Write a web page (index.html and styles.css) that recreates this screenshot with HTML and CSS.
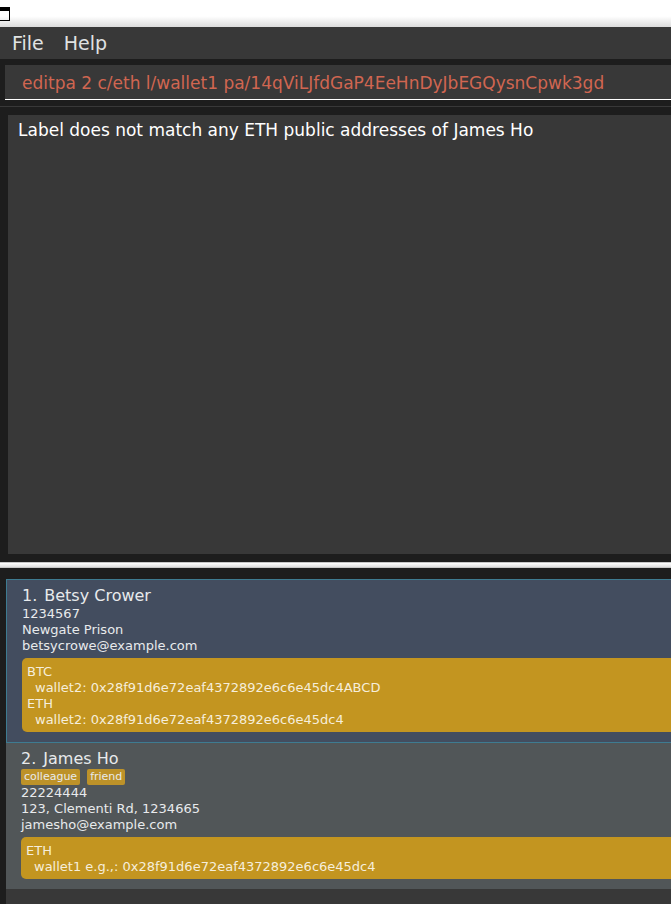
FILE: index.html
```html
<!DOCTYPE html>
<html lang="en">
<head>
<meta charset="utf-8">
<title>Address Book</title>
<link rel="stylesheet" href="styles.css">
</head>
<body>
<header class="titlebar">
  <svg class="window-icon" width="10" height="14" viewBox="0 0 10 14" aria-hidden="true">
    <path d="M0 0h10v14H0v-1h9V4H0z" fill="#000"/>
  </svg>
</header>
<nav class="menubar">
  <button class="menu" type="button">File</button>
  <button class="menu" type="button">Help</button>
</nav>
<div class="command-pane">
  <input class="command" type="text" aria-label="Command" spellcheck="false" value="editpa 2 c/eth l/wallet1 pa/14qViLJfdGaP4EeHnDyJbEGQysnCpwk3gd">
</div>
<section class="result-pane">
  <output class="result">Label does not match any ETH public addresses of James Ho</output>
</section>
<div class="divider"></div>
<main class="list-pane">
  <div class="list">
    <article class="card selected">
      <h2 class="name"><span>1.</span><span>Betsy Crower</span></h2>
      <p>1234567</p>
      <p>Newgate Prison</p>
      <p>betsycrowe@example.com</p>
      <div class="wallets">
        <p>BTC</p>
        <p class="address">wallet2: 0x28f91d6e72eaf4372892e6c6e45dc4ABCD</p>
        <p>ETH</p>
        <p class="address">wallet2: 0x28f91d6e72eaf4372892e6c6e45dc4</p>
      </div>
    </article>
    <article class="card">
      <h2 class="name"><span>2.</span><span>James Ho</span></h2>
      <div class="tags"><span class="tag">colleague</span><span class="tag">friend</span></div>
      <p>22224444</p>
      <p>123, Clementi Rd, 1234665</p>
      <p>jamesho@example.com</p>
      <div class="wallets">
        <p>ETH</p>
        <p class="address">wallet1 e.g.,: 0x28f91d6e72eaf4372892e6c6e45dc4</p>
      </div>
    </article>
  </div>
</main>
</body>
</html>
```
FILE: styles.css
```css
* {
  box-sizing: border-box;
}

body {
  display: flex;
  flex-direction: column;
  min-height: 100vh;
  margin: 0;
  background: #1d1d1d;
  color: #e8eaec;
  font: 13px/16px "DejaVu Sans", sans-serif;
}

h2,
p {
  margin: 0;
  font-weight: normal;
}

.titlebar {
  height: 27px;
  padding-top: 7px;
  background: linear-gradient(#fff 60%, #dcdcdc);
}

.window-icon {
  display: block;
}

.menubar {
  display: flex;
  gap: 20px;
  height: 32px;
  padding: 0 12px;
  background: #383838;
}

.menu {
  padding: 0;
  border: 0;
  background: none;
  color: #e0e2e2;
  font: 19px/32px "DejaVu Sans", sans-serif;
}

.command-pane {
  padding: 6px 0 6px 5px;
  border-bottom: 1px solid #383838;
}

.command {
  display: block;
  width: 100%;
  height: 35px;
  padding: 2px 17px 0;
  border: 0;
  border-bottom: 1px solid #fff;
  border-radius: 0;
  outline: 0;
  background: #383838;
  color: #d06651;
  font: 17px "DejaVu Sans", sans-serif;
}

.result-pane {
  display: flex;
  flex: 1;
  padding: 8px 0 8px 8px;
}

.result {
  flex: 1;
  padding: 4px 10px;
  background: #383838;
  color: #fff;
  font-size: 17px;
  line-height: 22px;
}

.divider {
  height: 6px;
  border: solid #c6c6c6;
  border-width: 1px 0;
  background: linear-gradient(#fff, #dedede);
}

.list-pane {
  padding: 11px 0 0 6px;
}

.list {
  padding-bottom: 15px;
  background: #383838;
}

.card {
  padding: 6px 0 10px 15px;
  background: #515658;
}

.selected {
  border: solid #3e7b91;
  border-width: 1px 0 1px 1px;
  background: #434d5f;
}

.name {
  display: flex;
  gap: 7px;
  font-size: 16px;
  line-height: 20px;
}

.tags {
  display: flex;
  gap: 7px;
}

.tag {
  padding: 0 3px;
  border-radius: 2px;
  background: #bd9229;
  font-size: 11px;
}

.wallets {
  margin-top: 4px;
  padding: 6px 5px 4px;
  border-radius: 5px 0 0 5px;
  background: #c39520;
  color: #f6eedb;
}

.address {
  padding-left: 8px;
}
```
